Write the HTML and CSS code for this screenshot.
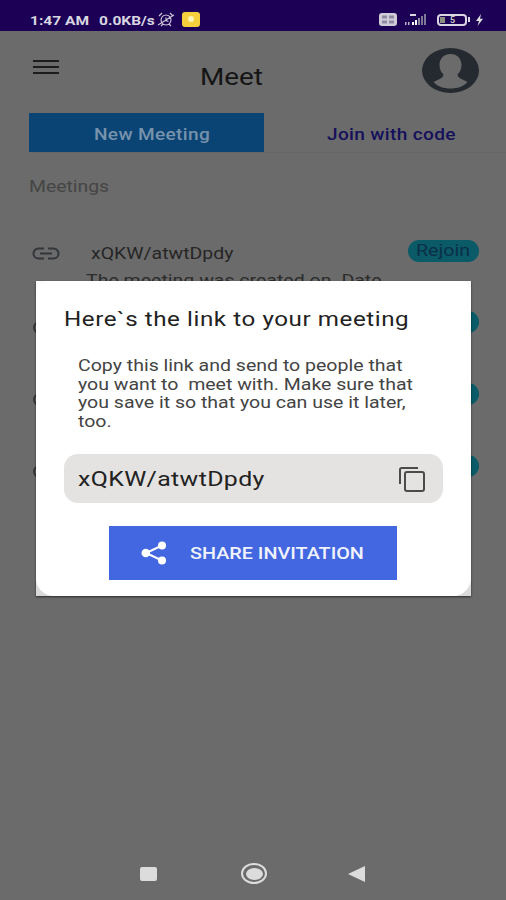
FILE: index.html
```html
<!DOCTYPE html>
<html lang="en">
<head>
    <meta charset="UTF-8" />
    <meta name="viewport" content="width=device-width, initial-scale=1" />
    <title>Meet</title>
    <link rel="stylesheet" href="styles.css">
</head>
<body>
    <div class="phone">
        <div class="statusbar">
            <div class="status-left">
                <span class="clock">1:47 AM</span>
                <span class="speed">0.0KB/s</span>
                <svg class="alarm" width="18" height="15" viewBox="0 0 18 15" fill="none" stroke="#c9c4d6" stroke-width="1.200">
                    <path d="M9 3a5 5 0 1 1-.01 0M9 5.500v3l2.500 1M2 4l3-3M16 4l-3-3M1 13l16-10M4 14l2-2M14 14l-2-2" />
                </svg>
                <span class="app-badge"><span class="app-dot"></span></span>
            </div>
            <div class="status-right">
                <svg class="volte" width="18" height="13" viewBox="0 0 18 13">
                    <rect width="18" height="13" rx="3" fill="#d0cdd9" />
                    <rect x="3" y="2.500" width="5" height="3" fill="#8f8aa4" />
                    <rect x="10" y="2.500" width="5" height="3" fill="#8f8aa4" />
                    <rect x="3" y="7.500" width="5" height="3" fill="#8f8aa4" />
                    <rect x="10" y="7.500" width="5" height="3" fill="#8f8aa4" />
                </svg>
                <svg class="signal" width="26" height="14" viewBox="0 0 26 14">
                    <rect x="6" y="1" width="6" height="2" fill="#d9d6e2" />
                    <rect x="1" y="9" width="1.500" height="3" fill="#b9b5c8" />
                    <rect x="4" y="9" width="1.500" height="3" fill="#b9b5c8" />
                    <rect x="8" y="9" width="2" height="3" fill="#fff" />
                    <rect x="11" y="7" width="2" height="5" fill="#fff" />
                    <rect x="14" y="5" width="2" height="7" fill="#8f8aa4" />
                    <rect x="17" y="3" width="2" height="9" fill="#7d7896" />
                    <rect x="20" y="1" width="2" height="11" fill="#7d7896" />
                </svg>
                <span class="battery"><span class="battery-fill"></span><span class="battery-num">5</span></span>
                <span class="battery-tip"></span>
                <svg class="bolt" width="9" height="12" viewBox="0 0 9 12">
                    <path d="M6 0L1 7h3l-1.500 5L8 4.800H5z" fill="#ddd" />
                </svg>
            </div>
        </div>

        <div class="screen">
            <div class="topbar">
                <div class="menu-icon"><span></span><span></span><span></span></div>
                <div class="title">Meet</div>
                <svg class="avatar" width="57" height="45" viewBox="0 0 57 45">
                    <ellipse cx="28.500" cy="22.500" rx="28.500" ry="22.500" fill="#252a30" />
                    <path d="M28.500 6c-6.500 0-11 4.500-11 11 0 4.500 1.800 7.500 4 9.500 0 2-2 3.500-4 4.500l-6 3c4 4.500 10 6.500 17 6.500s13-2 17-6.500l-6-3c-2-1-4-2.500-4-4.500 2.200-2 4-5 4-9.500 0-6.500-4.500-11-11-11z" fill="#6b6b6b" />
                </svg>
            </div>

            <div class="tabs">
                <div class="tab tab-active"><span>New Meeting</span></div>
                <div class="tab tab-plain"><span>Join with code</span></div>
            </div>

            <div class="section-label">Meetings</div>

            <div class="meeting-row">
                <svg class="link-icon" width="28" height="13" viewBox="0 0 28 13" fill="none" stroke="#33363a" stroke-width="2">
                    <path d="M12 1.500H6.500a5 5 0 0 0 0 10H12M16 1.500h5.500a5 5 0 0 1 0 10H16M8 6.500h12" />
                </svg>
                <span class="meeting-code">xQKW/atwtDpdy</span>
                <span class="rejoin"><span>Rejoin</span></span>
            </div>
            <div class="meeting-date">The meeting was created on. Date</div>

            <div class="row-stub row-stub-1"><span class="stub-link"></span><span class="stub-pill"></span></div>
            <div class="row-stub row-stub-2"><span class="stub-link"></span><span class="stub-pill"></span></div>
            <div class="row-stub row-stub-3"><span class="stub-link"></span><span class="stub-pill"></span></div>

            <div class="navbar">
                <span class="nav-square"></span>
                <span class="nav-circle"><span></span></span>
                <span class="nav-back"></span>
            </div>
        </div>

        <div class="dialog">
            <div class="dialog-body">
                <h2>Here`s the link to your meeting</h2>
                <p>Copy this link and send to people that<br>you want to &nbsp;meet with. Make sure that<br>you save it so that you can use it later,<br>too.</p>
                <div class="link-box">
                    <span>xQKW/atwtDpdy</span>
                    <svg width="30" height="28" viewBox="0 0 30 28" fill="none" stroke="#4a4a4a" stroke-width="2">
                        <path d="M21 3H4.500a1.500 1.500 0 0 0-1.500 1.500V19" />
                        <rect x="8" y="7" width="19" height="19" rx="2" />
                    </svg>
                </div>
                <button class="share-btn">
                    <svg width="26" height="24" viewBox="0 0 26 24">
                        <path d="M21 4.500L5 12l16 7.500" fill="none" stroke="#fff" stroke-width="2" />
                        <circle cx="21" cy="4.500" r="4" fill="#fff" />
                        <circle cx="4.800" cy="12" r="4.300" fill="#fff" />
                        <circle cx="21" cy="19.500" r="4" fill="#fff" />
                    </svg>
                    <span>SHARE INVITATION</span>
                </button>
            </div>
        </div>
    </div>
</body>
</html>
```

FILE: styles.css
```css
/* the screenshot is stretched sideways, so the text gets a scaleX to match */
* {
    box-sizing: border-box;
}
body {
    margin: 0;
    background-color: #6b6b6b;
    font-family: Roboto, "Liberation Sans", sans-serif;
}
.phone {
    position: relative;
    width: 506px;
    height: 900px;
    overflow: hidden;
    display: flex;
    flex-direction: column;
}
.statusbar {
    height: 31px;
    flex-shrink: 0;
    background-color: #1b0056;
    color: #d8d6e0;
    display: flex;
    justify-content: space-between;
    align-items: center;
    padding: 8px 22px 0 30px;
    font-size: 13.500px;
    font-weight: 700;
}
.status-left,
.status-right {
    display: flex;
    align-items: center;
}
.clock,
.speed {
    transform: scaleX(1.15);
    transform-origin: left center;
}
.speed {
    margin-left: 18px;
}
.alarm {
    margin-left: 9px;
}
.app-badge {
    width: 18px;
    height: 15px;
    margin-left: 7px;
    margin-top: -1px;
    border-radius: 3px;
    background-color: #f5cf3c;
    display: flex;
    align-items: center;
    justify-content: center;
}
.app-dot {
    width: 6px;
    height: 6px;
    border-radius: 50%;
    background-color: #fff3b8;
}
.signal {
    margin-left: 7px;
}
.battery {
    width: 30px;
    height: 12px;
    margin-left: 7px;
    border: 2px solid #d8d6e0;
    border-radius: 4px;
    position: relative;
    display: block;
}
.battery-fill {
    position: absolute;
    left: 1px;
    top: 1px;
    bottom: 1px;
    width: 5px;
    background-color: #8a8f80;
}
.battery-num {
    position: absolute;
    left: 11px;
    top: -2px;
    font-size: 9px;
    line-height: 12px;
    color: #c8c8c0;
}
.battery-tip {
    width: 2px;
    height: 5px;
    margin-left: 1px;
    background-color: #d8d6e0;
}
.bolt {
    margin-left: 5px;
}
.screen {
    flex: 1;
    position: relative;
    display: flex;
    flex-direction: column;
}
.topbar {
    height: 82px;
    padding: 17px 27px 0 33px;
    display: flex;
    justify-content: space-between;
    align-items: flex-start;
    position: relative;
}
.menu-icon {
    width: 26px;
    margin-top: 12px;
    display: flex;
    flex-direction: column;
    gap: 4px;
}
.menu-icon span {
    height: 2px;
    background-color: #1c1c1c;
}
.title {
    position: absolute;
    left: 200px;
    top: 31px;
    font-size: 24px;
    line-height: 30px;
    color: #151515;
    transform: scaleX(1.16);
    transform-origin: left center;
}
.tabs {
    height: 40px;
    display: flex;
    align-items: stretch;
    margin-left: 29px;
    border-bottom: 1px solid #676767;
}
.tab {
    display: flex;
    align-items: center;
    padding-top: 3px;
    font-size: 16.500px;
    font-weight: 500;
    letter-spacing: 0.300px;
}
.tab span {
    transform: scaleX(1.155);
    transform-origin: left center;
}
.tab-active {
    width: 235px;
    padding-left: 65px;
    background-color: #0a4474;
    color: #7792ad;
}
.tab-plain {
    flex: 1;
    padding-left: 63px;
    color: #15105c;
}
.section-label {
    margin: 24px 0 0 29px;
    font-size: 16px;
    line-height: 20px;
    color: #454545;
    transform: scaleX(1.21);
    transform-origin: left center;
}
.meeting-row {
    display: flex;
    align-items: center;
    margin-top: 42px;
    padding: 0 27px 0 32px;
    height: 28px;
}
.meeting-code {
    margin-left: 31px;
    font-size: 16.500px;
    color: #262626;
    transform: scaleX(1.18);
    transform-origin: left center;
}
.rejoin {
    margin-left: auto;
    margin-top: -5px;
    width: 71px;
    height: 22px;
    border-radius: 11px;
    background-color: #0a5a68;
    color: #0c2f48;
    font-size: 16px;
    line-height: 22px;
    display: flex;
    justify-content: center;
}
.rejoin span {
    transform: scaleX(1.23);
}
.meeting-date {
    margin: 4px 0 0 86px;
    font-size: 16px;
    line-height: 20px;
    color: #2c2c2c;
    transform: scaleX(1.22);
    transform-origin: left center;
}
.row-stub {
    position: absolute;
    left: 33px;
    right: 27px;
    height: 20px;
    display: flex;
    justify-content: space-between;
    align-items: center;
}
.row-stub-1 {
    top: 286px;
}
.row-stub-2 {
    top: 358px;
}
.row-stub-3 {
    top: 430px;
}
.stub-link {
    width: 14px;
    height: 13px;
    border: 2px solid #33363a;
    border-radius: 7px;
}
.stub-pill {
    width: 30px;
    height: 22px;
    margin-top: -10px;
    border-radius: 11px;
    background-color: #0a5a68;
}
.navbar {
    position: absolute;
    left: 0;
    right: 0;
    bottom: 0;
    height: 53px;
    display: flex;
    align-items: center;
    padding-left: 140px;
}
.nav-square {
    width: 17px;
    height: 14px;
    border-radius: 2px;
    background-color: #dcdcdc;
}
.nav-circle {
    width: 26px;
    height: 21px;
    margin: 0 81px 0 84px;
    border: 2px solid #dcdcdc;
    border-radius: 50%;
    display: flex;
    align-items: center;
    justify-content: center;
}
.nav-circle span {
    width: 17px;
    height: 12px;
    border-radius: 50%;
    background-color: #dcdcdc;
}
.nav-back {
    width: 0;
    height: 0;
    border-style: solid;
    border-width: 8px 17px 8px 0;
    border-color: transparent #dcdcdc transparent transparent;
}
.dialog {
    position: absolute;
    left: 36px;
    top: 281px;
    width: 435px;
    height: 315px;
    background: linear-gradient(#fbfbfb, #f8f8f8 80%, #d8d8d8);
    box-shadow: 0 1px 2px rgba(0, 0, 0, 0.6);
    color: #222;
}
.dialog-body {
    height: 100%;
    background-color: white;
    border-radius: 14px 14px 18px 18px;
    padding: 24px 28px 0;
}
.dialog h2 {
    margin: 0;
    font-size: 21px;
    line-height: 28px;
    font-weight: 400;
    letter-spacing: 0.500px;
    white-space: nowrap;
    transform: scaleX(1.15);
    transform-origin: left center;
}
.dialog p {
    margin: 24px 0 0 14px;
    font-size: 16px;
    line-height: 18.500px;
    color: #444;
    white-space: nowrap;
    transform: scaleX(1.22);
    transform-origin: left center;
}
.link-box {
    margin-top: 23px;
    height: 49px;
    background-color: #e4e3e1;
    border-radius: 14px;
    display: flex;
    justify-content: space-between;
    align-items: center;
    padding: 1px 16px 0 14px;
    font-size: 21px;
    letter-spacing: 0.300px;
}
.link-box span {
    transform: scaleX(1.185);
    transform-origin: left center;
}
.share-btn {
    display: flex;
    align-items: center;
    gap: 23px;
    width: 288px;
    height: 54px;
    margin: 23px 0 0 45px;
    padding: 0 0 0 32px;
    border: none;
    background-color: #4267e0;
    color: #f0f3fc;
    font-family: inherit;
    font-size: 16px;
    font-weight: 500;
}
.share-btn span {
    transform: scaleX(1.236);
    transform-origin: left center;
}
```
